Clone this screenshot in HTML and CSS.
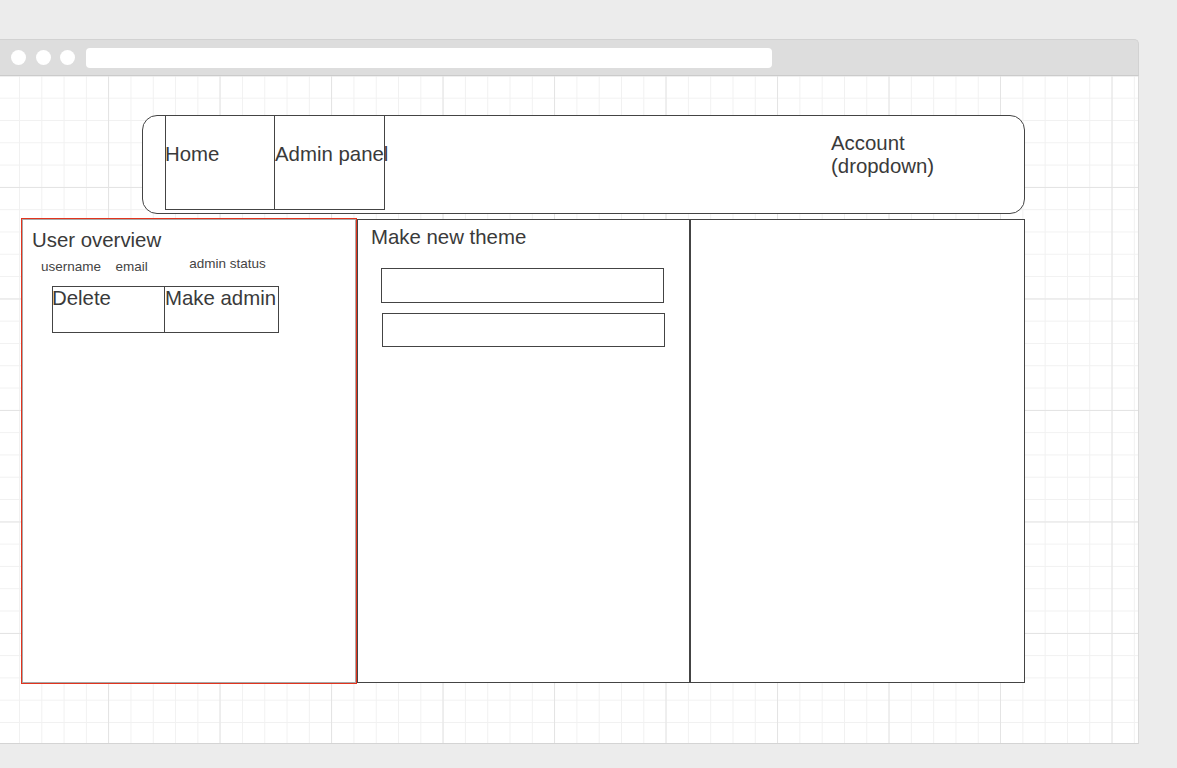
FILE: index.html
```html
<!DOCTYPE html>
<html lang="en">
<head>
<meta charset="utf-8">
<title>Admin panel wireframe</title>
<link rel="stylesheet" href="styles.css">
</head>
<body>
<div class="browser">
  <div class="toolbar">
    <span class="dot"></span>
    <span class="dot"></span>
    <span class="dot"></span>
    <div class="address"></div>
  </div>
  <div class="canvas">
    <div class="nav">
      <div class="tabs">
        <div class="tab">Home</div>
        <div class="tab">Admin panel</div>
      </div>
      <div class="account">Account<br>(dropdown)</div>
    </div>
    <div class="panels">
      <section class="panel panel-users">
        <h2 class="title">User overview</h2>
        <div class="labels">
          <span class="label">username</span>
          <span class="label label-email">email</span>
          <span class="label label-admin">admin status</span>
        </div>
        <div class="actions">
          <div class="action">Delete</div>
          <div class="action">Make admin</div>
        </div>
      </section>
      <section class="panel panel-theme">
        <h2 class="title">Make new theme</h2>
        <div class="field field-one"></div>
        <div class="field field-two"></div>
      </section>
      <section class="panel panel-empty"></section>
    </div>
  </div>
</div>
</body>
</html>
```

FILE: styles.css
```css
* { box-sizing: border-box; }

html, body {
  margin: 0;
  padding: 0;
  background: #ececec;
  font-family: "Liberation Sans", Arial, sans-serif;
  color: #3a3a3a;
}

.browser {
  margin-top: 39px;
  width: 1139px;
}

.toolbar {
  height: 37px;
  background: #dddddd;
  border-top: 1px solid #d2d2d2;
  border-right: 1px solid #d2d2d2;
  border-bottom: 1px solid #cbcbcb;
  border-top-right-radius: 5px;
  display: flex;
  align-items: center;
  padding-left: 11px;
  gap: 9.5px;
}

.dot {
  width: 15px;
  height: 15px;
  border-radius: 50%;
  background: #ffffff;
  flex: none;
}

.address {
  margin-left: 1.5px;
  width: 686px;
  height: 20px;
  background: #ffffff;
  border-radius: 4px;
  margin-top: 1px;
}

.canvas {
  height: 668px;
  border-right: 1px solid #dadada;
  border-bottom: 1px solid #d4d4d4;
  background-color: #ffffff;
  background-image:
    linear-gradient(to right, #e4e4e4 1px, transparent 1px),
    linear-gradient(to bottom, #e4e4e4 1px, transparent 1px),
    linear-gradient(to right, #f1f1f1 1px, transparent 1px),
    linear-gradient(to bottom, #f1f1f1 1px, transparent 1px);
  background-size:
    111.5px 100%,
    100% 111.5px,
    22.3px 100%,
    100% 22.3px;
  background-position:
    108px 0,
    0 111px,
    19px 0,
    0 21.7px;
  padding-top: 39px;
}

.nav {
  margin-left: 142px;
  width: 883px;
  height: 99px;
  border: 1px solid #444444;
  border-radius: 15px;
  background: #ffffff;
  display: flex;
  align-items: flex-start;
}

.tabs {
  display: flex;
  margin-left: 22px;
  margin-top: -1px;
}

.tab {
  width: 110px;
  height: 95px;
  border: 1px solid #444444;
  font-size: 20.4px;
  line-height: 23px;
  padding-top: 27px;
  text-indent: -1px;
  white-space: nowrap;
}

.tab + .tab {
  border-left: none;
  width: 110px;
  text-indent: 0;
}

.account {
  margin-left: 446px;
  padding-top: 16px;
  font-size: 20.4px;
  line-height: 23px;
}

.panels {
  display: flex;
  align-items: flex-start;
  margin-top: 4px;
  margin-left: 21px;
}

.panel {
  height: 464px;
  border: 1px solid #444444;
  background: #ffffff;
  margin-top: 1px;
}

.panel-users {
  width: 336px;
  height: 466px;
  margin-top: 0;
  border: 1px solid #e2341e;
  box-shadow: inset 0 0 0 1px #a8a8a8;
  padding: 9.5px 0 0 10px;
}

.panel-theme {
  width: 333px;
  padding: 5.5px 0 0 13px;
}

.panel-empty {
  width: 335px;
}

.title {
  margin: 0;
  font-size: 20.4px;
  line-height: 23px;
  font-weight: normal;
  white-space: nowrap;
}

.labels {
  display: flex;
  align-items: flex-start;
  margin-top: 7.5px;
  padding-left: 9px;
}

.label {
  font-size: 13.5px;
  line-height: 16px;
  white-space: nowrap;
  color: #444444;
}

.label-email {
  margin-left: 14.5px;
}

.label-admin {
  margin-left: 41.5px;
  margin-top: -3px;
}

.actions {
  display: flex;
  margin-top: 11px;
  margin-left: 20px;
}

.action {
  width: 113px;
  height: 47px;
  border: 1px solid #444444;
  font-size: 20.4px;
  line-height: 23px;
  text-indent: -1px;
  white-space: nowrap;
}

.action + .action {
  border-left: none;
  width: 114px;
  text-indent: 0;
}

.field {
  border: 1px solid #444444;
  width: 283px;
  margin-left: 9.5px;
}

.field-one {
  margin-top: 19.5px;
  height: 35px;
}

.field-two {
  margin-top: 10px;
  margin-left: 10.5px;
  height: 34px;
}
```
